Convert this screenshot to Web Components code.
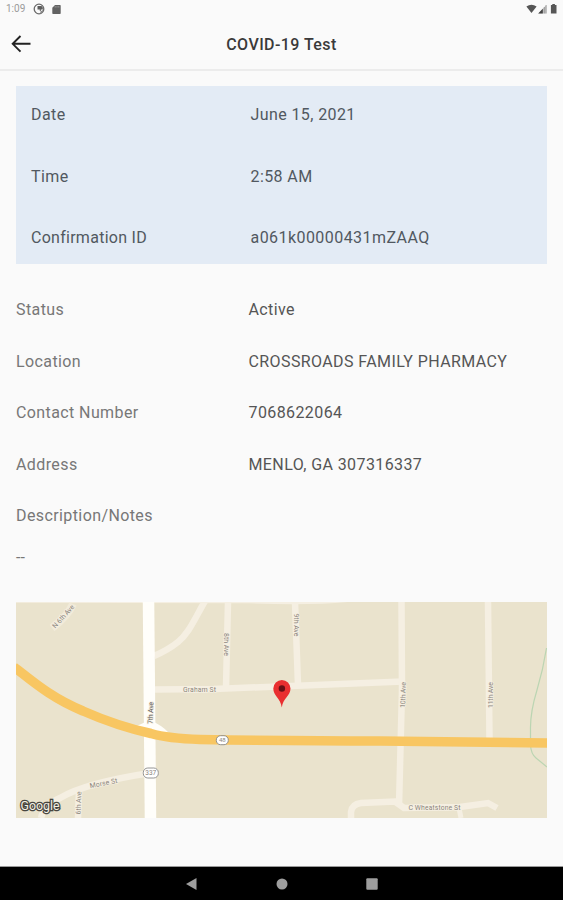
<!DOCTYPE html>
<html lang="en">
<head>
<meta charset="utf-8">
<title>COVID-19 Test</title>
<style>
body{margin:0;background:#fafafa;font-family:Roboto,"Noto Sans",sans-serif}
</style>
</head>
<body>
<app-screen>
  <status-bar slot="status">1:09</status-bar>
  <title-bar slot="header">COVID-19 Test</title-bar>
  <summary-card>
    <info-row label="Date">June 15, 2021</info-row>
    <info-row label="Time">2:58 AM</info-row>
    <info-row label="Confirmation ID" style="--ls:.27px;--vs:.44px">a061k00000431mZAAQ</info-row>
  </summary-card>
  <detail-list>
    <info-row label="Status">Active</info-row>
    <info-row label="Location">CROSSROADS FAMILY PHARMACY</info-row>
    <info-row label="Contact Number">7068622064</info-row>
    <info-row label="Address">MENLO, GA 307316337</info-row>
    <info-row label="Description/Notes"></info-row>
    <span slot="notes">--</span>
  </detail-list>
  <location-map></location-map>
  <nav-bar slot="nav"></nav-bar>
</app-screen>
<script>
const define = (name, html) => customElements.define(name, class extends HTMLElement {
  constructor() {
    super();
    this.attachShadow({mode: 'open'}).innerHTML = html;
    const label = this.shadowRoot.querySelector('[data-label]');
    if (label) label.textContent = this.getAttribute('label') || '';
  }
});

define('app-screen', `
<style>
:host{display:flex;flex-direction:column;height:900px;background:#fafafa;overflow:hidden}
main{flex:1;display:flex;flex-direction:column;padding:15px 16px 0;min-height:0}
</style>
<slot name="status"></slot><slot name="header"></slot><main><slot></slot></main><slot name="nav"></slot>`);

define('status-bar', `
<style>
:host{display:flex;align-items:center;box-sizing:border-box;height:18px;padding:0 4px 0 6px;font-size:10px;line-height:18px;color:#9a9a9a}
.left{margin-left:8px}.sd{margin-left:6.500px}.right{margin-left:auto}
svg{display:block}
</style>
<slot></slot>
<svg class="left" width="12" height="12" viewBox="0 0 12 12"><circle cx="6" cy="6" r="4.8" fill="#fafafa" stroke="#6a6a6a" stroke-width="1.300"/><path d="M4.500 3H8.500Q10.500 4 9.800 6.500H7.800V8H6.800V6.500H4.500z" fill="#5d5d5d"/><path d="M7.300 8.500L10.200 7 9.500 9.500 7.300 10.800z" fill="#888"/></svg>
<svg class="sd" width="9" height="11" viewBox="0 0 9 11"><path d="M3 1h5q.7 0 .7.7v7.600q0 .7-.7.7H1q-.7 0-.7-.7V3.700z" fill="#626262"/><path d="M3.200 2v1.600M5 2v1.600M6.800 2v1.600" stroke="#aaa" stroke-width=".7"/></svg>
<svg class="right" width="34" height="12" viewBox="0 0 34 12"><path d="M1.400 3.600Q6.400-.3 11.600 3.600L6.500 10z" fill="#555"/><path d="M13.200 10.500L21.300 2v8.500z" fill="#c3c3c3"/><path d="M13.200 10.500L17.800 5.700v4.800z" fill="#444"/><path d="M19.300 4v6.500M21.100 2v8.500" stroke="#8b8b8b" stroke-width=".7"/><path d="M27.300 1h2.600v1h1.600v8.500h-5.600V2h1.400z" fill="#565656"/></svg>`);

define('title-bar', `
<style>
:host{display:grid;grid-template-columns:50px 1fr 50px;align-items:center;box-sizing:border-box;height:53px;border-bottom:2px solid #ececec;color:#3a3a3a;font-size:16px;font-weight:500;letter-spacing:.43px;text-align:center}
svg{display:block;margin-left:10px}
span{padding-top:1.500px}
</style>
<svg width="22" height="20" viewBox="0 0 22 20" fill="none" stroke="#222" stroke-width="1.9"><path d="M20.500 9.800H2.700M10.500 2L2.700 9.800L10.500 17.600"/></svg>
<span><slot></slot></span>`);

define('summary-card', `
<style>
:host{display:flex;flex-direction:column;gap:39.200px;box-sizing:border-box;height:178px;padding:18.400px 15px 0;background:#e3ebf5;--split:219.500px;--label:#515860;--value:#515860}
</style><slot></slot>`);

define('detail-list', `
<style>
:host{display:flex;flex-direction:column;gap:29.400px;box-sizing:border-box;height:337.500px;padding-top:35.400px;--split:232.500px;--label:#777;--value:#555}
.note{margin-top:-9px;line-height:22px;font-size:16px;color:#777}
</style><slot></slot><div class="note"><slot name="notes"></slot></div>`);

define('info-row', `
<style>
:host{display:grid;grid-template-columns:var(--split) 1fr;font-size:16px;line-height:22px;height:22px;white-space:nowrap}
.l{color:var(--label);letter-spacing:var(--ls,.4px)}
.v{color:var(--value);letter-spacing:var(--vs,.4px)}
</style><span class="l" data-label></span><span class="v"><slot></slot></span>`);

define('location-map', `
<style>
:host{display:block;height:216px}
svg{display:block}
text{font-family:Roboto,sans-serif;font-size:7px;fill:#8b857e;text-anchor:middle}
.halo{stroke:#f5efe1;stroke-width:1.500px;paint-order:stroke}
</style>
<svg width="531" height="216" viewBox="16 602 531 216">
<rect x="16" y="601" width="531" height="218" fill="#eae3cd"/>
<g fill="none" stroke="#f5efe2" stroke-width="6.500">
<path d="M16 601L250 601.500Q310 604 350 600" stroke-width="3.500"/>
<path d="M205 601C194 620 189 633 178 642Q168 650 154 656"/>
<path d="M154 689.500L214 689L403 681.500"/>
<path d="M228 602L226 688M295 602L298 685M401.500 602L402 690 399 806"/>
<path d="M488 602L489.500 740"/>
<path d="M351 818V812Q352 804 361 803L395 801.500 404 808 460 807 488 803 497 808"/>
<path d="M459 808L461 818" stroke-width="5"/>
<path d="M41 818Q44 805 60 798Q85 783 150 773"/>
<path d="M79 790L78 818"/>
<path d="M52 628Q68 616 73 604" stroke-width="8" stroke="#f1ead9"/>
</g>
<path d="M546.500 648Q543 670 537 690Q530 713 530.500 730V745Q531 754 536 758L547 767" fill="none" stroke="#bbd5b2" stroke-width="1.200"/>
<path d="M148.500 600L150.500 819" stroke="#fffefa" stroke-width="11.500"/>
<path d="M132 728Q144 723 149 720Q162 725 169 733L160 735z" fill="#fffefa"/>
<path d="M14 667C31 680 51 698 83 711Q117 726 151 733.500Q168 738.500 200 739.500Q300 741 380 741L549 743" fill="none" stroke="#f8c662" stroke-width="9.500"/>
<text class="halo" transform="translate(65 618) rotate(-48)" textLength="29">N 6th Ave</text>
<text class="halo" transform="translate(153 713) rotate(-88)" textLength="22" style="fill:#555">7th Ave</text>
<text class="halo" transform="translate(224 644.500) rotate(90)" textLength="23">8th Ave</text>
<text class="halo" transform="translate(294 625) rotate(90)" textLength="23">9th Ave</text>
<text class="halo" transform="translate(405.500 695) rotate(-88)" textLength="26">10th Ave</text>
<text class="halo" transform="translate(492.500 695) rotate(-90)" textLength="26">11th Ave</text>
<text class="halo" x="199.500" y="691.500" textLength="33">Graham St</text>
<text class="halo" transform="translate(104 785.500) rotate(-11)" textLength="28">Morse St</text>
<text class="halo" transform="translate(81 803) rotate(-88)" textLength="23">6th Ave</text>
<text class="halo" x="434.500" y="809.500" textLength="52">C Wheatstone St</text>
<rect x="216.300" y="735.700" width="12" height="9" rx="4.300" fill="#fff" stroke="#888" stroke-width=".9"/>
<text x="222.300" y="742.400" style="font-size:6px">48</text>
<rect x="143.300" y="768" width="15" height="10" rx="4.500" fill="#fff" stroke="#888" stroke-width=".9"/>
<text x="150.800" y="775.300" style="font-size:6.500px">337</text>
<path d="M281.800 707.500C280.500 698 273.300 696 273.300 688.500A8.600 8.600 0 0 1 290.500 688.500C290.500 696 283 698 281.800 707.500z" fill="#e92f30"/>
<circle cx="281.900" cy="688.500" r="3.200" fill="#671015"/>
<text x="40" y="809.500" textLength="39" lengthAdjust="spacingAndGlyphs" style="font:400 12.500px Roboto,sans-serif;fill:#f4f0e4;stroke:#484640;stroke-width:2.600px;paint-order:stroke">Google</text>
</svg>`);

define('nav-bar', `
<style>
:host{display:grid;grid-template-columns:repeat(3,90px);justify-content:center;justify-items:center;align-items:center;box-sizing:border-box;height:34px;border-top:1px solid #999;background:#000}
svg{display:block}
</style>
<svg width="12" height="12" viewBox="0 0 12 12"><path d="M0 6L10.500 0v12z" fill="#9e9e9e"/></svg>
<svg width="12" height="12" viewBox="0 0 12 12"><circle cx="6" cy="6" r="5.500" fill="#9e9e9e"/></svg>
<svg width="12" height="12" viewBox="0 0 12 12"><rect x=".3" y=".3" width="11.400" height="11.400" rx="1" fill="#9e9e9e"/></svg>`);
</script>
</body>
</html>
